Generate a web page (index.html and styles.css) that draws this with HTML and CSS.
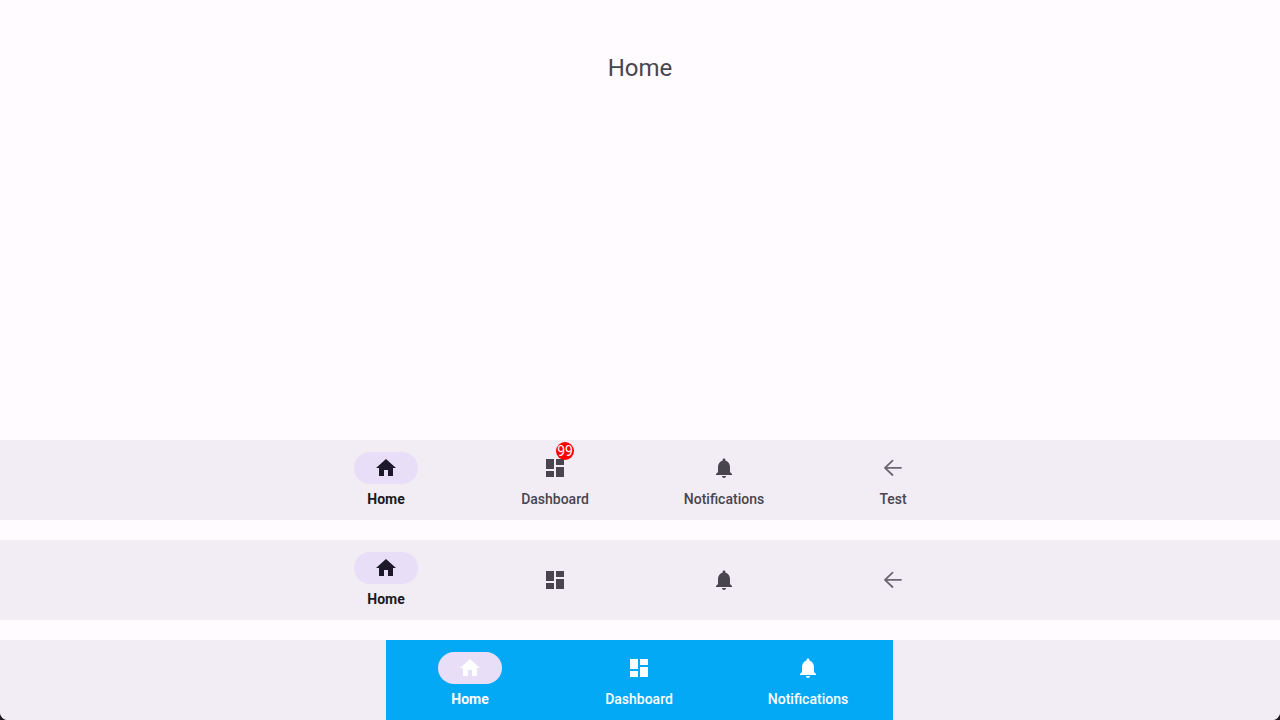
FILE: index.html
```html
<!DOCTYPE html>
<html lang="en">
<head>
<meta charset="utf-8">
<meta name="viewport" content="width=device-width, initial-scale=1">
<title>Home</title>
<link rel="stylesheet" href="styles.css">
</head>
<body>
<svg class="sprite" aria-hidden="true">
  <symbol id="home" viewBox="0 0 24 24"><path d="M10 20v-6h4v6h5v-8h3L12 3 2 12h3v8z"/></symbol>
  <symbol id="dashboard" viewBox="0 0 24 24"><path d="M3 13h8V3H3v10zm0 8h8v-6H3v6zm10 0h8V11h-8v10zm0-18v6h8V3h-8z"/></symbol>
  <symbol id="bell" viewBox="0 0 24 24"><path d="M12 22c1.100 0 2-.9 2-2h-4c0 1.100.890 2 2 2zm6-6v-5c0-3.070-1.640-5.640-4.500-6.320V4c0-.830-.670-1.500-1.500-1.500s-1.500.670-1.500 1.500v.680C7.630 5.360 6 7.920 6 11v5l-2 2v1h16v-1l-2-2z"/></symbol>
  <symbol id="back" viewBox="0 0 24 24"><path d="M20 11.800H4M11.500 4.600L4 11.800l7.500 7.200" fill="none" stroke="currentColor" stroke-width="1.800" stroke-linecap="round" stroke-linejoin="round" opacity=".8"/></symbol>
</svg>
<div class="window">
  <main class="content"><h1 class="title">Home</h1></main>
  <nav class="bar" aria-label="Main">
    <div class="items">
      <button class="item selected" type="button" aria-current="page"><span class="pill"><svg class="icon"><use href="#home"/></svg></span><span class="label">Home</span></button>
      <button class="item" type="button"><span class="pill"><svg class="icon"><use href="#dashboard"/></svg><span class="badge">99</span></span><span class="label">Dashboard</span></button>
      <button class="item" type="button"><span class="pill"><svg class="icon"><use href="#bell"/></svg></span><span class="label">Notifications</span></button>
      <button class="item" type="button"><span class="pill"><svg class="icon"><use href="#back"/></svg></span><span class="label">Test</span></button>
    </div>
  </nav>
  <nav class="bar" aria-label="Compact">
    <div class="items">
      <button class="item selected" type="button" aria-current="page"><span class="pill"><svg class="icon"><use href="#home"/></svg></span><span class="label">Home</span></button>
      <button class="item" type="button" aria-label="Dashboard"><span class="pill"><svg class="icon"><use href="#dashboard"/></svg></span></button>
      <button class="item" type="button" aria-label="Notifications"><span class="pill"><svg class="icon"><use href="#bell"/></svg></span></button>
      <button class="item" type="button" aria-label="Test"><span class="pill"><svg class="icon"><use href="#back"/></svg></span></button>
    </div>
  </nav>
  <nav class="bar tinted" aria-label="Tinted">
    <div class="items">
      <button class="item selected" type="button" aria-current="page"><span class="pill"><svg class="icon"><use href="#home"/></svg></span><span class="label">Home</span></button>
      <button class="item" type="button"><span class="pill"><svg class="icon"><use href="#dashboard"/></svg></span><span class="label">Dashboard</span></button>
      <button class="item" type="button"><span class="pill"><svg class="icon"><use href="#bell"/></svg></span><span class="label">Notifications</span></button>
    </div>
  </nav>
</div>
</body>
</html>
```

FILE: styles.css
```css
* { box-sizing: border-box; }

body {
  margin: 0;
  background: #1c1b1f;
  color: #49454f;
  font-family: Roboto, "Liberation Sans", sans-serif;
}

.sprite {
  position: absolute;
  width: 0;
  height: 0;
}

.window {
  display: flex;
  flex-direction: column;
  gap: 20px;
  min-height: 100vh;
  overflow: hidden;
  border-radius: 0 0 8px 8px;
  background: #fffbff;
}

.content {
  flex: 1;
  padding-top: 52px;
  margin-bottom: -20px;
}

.title {
  margin: 0;
  font-size: 24px;
  font-weight: 400;
  line-height: 32px;
  text-align: center;
}

.bar {
  display: flex;
  justify-content: center;
  background: #f2edf4;
}

.items { display: flex; }

.item {
  display: flex;
  flex-direction: column;
  align-items: center;
  justify-content: center;
  gap: 4px;
  width: 169px;
  min-height: 80px;
  padding: 10px 1px 8px 0;
  border: 0;
  background: none;
  color: inherit;
  font: 500 14px/22px Roboto, "Liberation Sans", sans-serif;
}

.item:not(:has(.label)) { padding-bottom: 10px; }

.pill {
  position: relative;
  display: flex;
  align-items: center;
  justify-content: center;
  width: 64px;
  height: 32px;
  border-radius: 16px;
}

.icon {
  width: 24px;
  height: 24px;
  fill: currentColor;
}

.selected {
  color: #1c1b1f;
  font-weight: 700;
}

.selected .pill {
  background: #e8def8;
  color: #1d192b;
}

.badge {
  position: absolute;
  top: -10px;
  left: 33px;
  width: 18px;
  height: 18px;
  border-radius: 9px;
  background: #f00;
  color: #fff;
  font-size: 14px;
  font-weight: 400;
  line-height: 18px;
  text-align: center;
}

.tinted { padding-right: 1px; }

.tinted .items { background: #03a9f4; }

.tinted .item,
.tinted .pill { color: #fff; }
```
